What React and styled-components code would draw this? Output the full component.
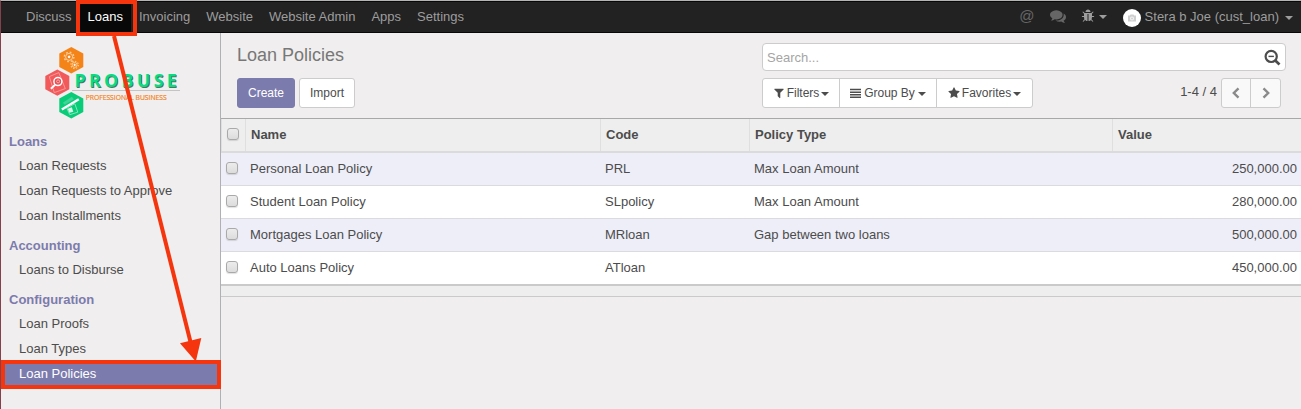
import React from "react";
import styled, { createGlobalStyle, css } from "styled-components";

const GlobalStyle = createGlobalStyle`
  *, *::before, *::after { box-sizing: border-box; }
  body {
    margin: 0;
    overflow: hidden;
    background: #f0eeee;
    color: #4c4c4c;
    font: 13px/20px "Liberation Sans", Arial, sans-serif;
  }
`;

const Page = styled.div`
  position: relative;
  display: flex;
  flex-direction: column;
  height: 409px;
  border-top: 1px solid #b4b4b4;
  border-left: 1px solid #84404c;
`;

const NavBar = styled.nav`
  display: flex;
  justify-content: space-between;
  flex: none;
  height: 32px;
  padding: 0 8px 0 17px;
  background: #222;
  border-top: 1px solid #080808;
  border-bottom: 1px solid #080808;
`;

const NavGroup = styled.div`
  display: flex;
  align-items: center;
`;

const NavLink = styled.a`
  padding: 5px 8px;
  height: 30px;
  line-height: 20px;
  color: ${(p) => (p.$active ? "#fff" : "#9d9d9d")};
  background: ${(p) => (p.$active ? "#080808" : "transparent")};
`;

const TrayItem = styled.span`
  display: flex;
  align-items: center;
  gap: ${(p) => p.$gap || 0}px;
  margin-left: ${(p) => p.$left || 0}px;
  padding-bottom: ${(p) => p.$lift || 0}px;
  color: ${(p) => (p.$dim ? "#666" : "#9d9d9d")};
`;

const AtSign = styled.span`
  font-size: 15px;
  line-height: 20px;
  height: 23px;
`;

const Caret = styled.i`
  display: inline-block;
  flex: none;
  margin-top: 2px;
  border-top: 4px solid currentColor;
  border-left: 4px solid transparent;
  border-right: 4px solid transparent;
`;

const Avatar = styled.span`
  display: flex;
  align-items: center;
  justify-content: center;
  width: 18px;
  height: 18px;
  margin-top: 2px;
  border-radius: 50%;
  background: #fff;
`;

const Body = styled.div`
  display: flex;
  flex: 1;
  min-height: 0;
`;

const Sidebar = styled.aside`
  flex: none;
  width: 220px;
  border-right: 1px solid #afafb6;
`;

const LogoArea = styled.div`
  height: 96px;
  padding: 12px 0 0 40px;
`;

const Section = styled.section`
  margin-bottom: 5px;
`;

const SectionTitle = styled.h4`
  margin: 0;
  padding: 3px 8px 1px;
  height: 24px;
  font-size: 13px;
  line-height: 20px;
  font-weight: bold;
  color: #7c7bad;
`;

const MenuItem = styled.a`
  display: block;
  height: 25px;
  padding: 3px 18px 2px;
  ${(p) =>
    p.$active &&
    css`
      background: #7c7bad;
      color: #fff;
    `}
`;

const Main = styled.main`
  display: flex;
  flex-direction: column;
  flex: 1;
  min-width: 0;
`;

const ControlPanel = styled.header`
  display: flex;
  justify-content: space-between;
  height: 86px;
  padding: 10px 15px 0 16px;
  border-bottom: 1px solid #a8a8a8;
`;

const TitleColumn = styled.div`
  display: flex;
  flex-direction: column;
`;

const Title = styled.h1`
  margin: 0 0 10px;
  height: 25px;
  font-size: 18px;
  line-height: 24px;
  font-weight: normal;
  color: #777;
`;

const ButtonRow = styled.div`
  display: flex;
  gap: 4px;
`;

const Button = styled.button`
  height: 30px;
  padding: 0 10px;
  border: 1px solid ${(p) => (p.$primary ? "#7c7bad" : "#ccc")};
  border-radius: 3px;
  background: ${(p) => (p.$primary ? "#7c7bad" : "#fff")};
  color: ${(p) => (p.$primary ? "#fff" : "#4c4c4c")};
  font: 12px/18px "Liberation Sans", Arial, sans-serif;
`;

const SearchColumn = styled.div`
  width: 524px;
`;

const SearchBox = styled.div`
  display: flex;
  align-items: center;
  justify-content: space-between;
  height: 28px;
  padding: 1px 4px 0;
  margin-bottom: 7px;
  border: 1px solid #ccc;
  border-radius: 4px;
  background: #fff;
  color: #a5a5a5;
`;

const SearchTools = styled.div`
  display: flex;
  justify-content: space-between;
  padding-right: 5px;
`;

const ButtonGroup = styled.div`
  display: flex;
  height: 30px;
  border: 1px solid #ccc;
  border-radius: 3px;
  background: ${(p) => (p.$soft ? "#f9f9f9" : "#fff")};
`;

const GroupButton = styled.span`
  display: flex;
  align-items: center;
  justify-content: center;
  gap: ${(p) => p.$gap ?? 3}px;
  width: ${(p) => p.$width}px;
  font-size: 12px;
  & + & { border-left: 1px solid #ccc; }
`;

const Pager = styled.div`
  display: flex;
  gap: 4px;
  line-height: 28px;
`;

const Table = styled.div`
  display: flex;
  flex-direction: column;
`;

const Row = styled.div`
  display: grid;
  grid-template-columns: 24px 355px 149px 363px 1fr;
  height: 33px;
  border-bottom: 1px solid #dbdbdf;
  background: ${(p) => (p.$odd ? "#eeeef8" : "#fff")};
  &:last-child { height: 34px; border-bottom: 2px solid #cacaca; }
`;

const HeaderRow = styled(Row)`
  height: 34px;
  border-bottom: 2px solid #dbdbdb;
  background: #eee;
  font-weight: bold;
`;

const Cell = styled.span`
  padding: 6px 4px 0 5px;
  text-align: ${(p) => (p.$right ? "right" : "left")};
`;

const HeadCell = styled(Cell)`
  border-left: 1px solid #dfdfdf;
`;

const Checkbox = styled.input.attrs({ type: "checkbox" })`
  appearance: none;
  display: block;
  width: 12px;
  height: 12px;
  margin: 3px 0 0;
  border: 1px solid #a9a9a9;
  border-radius: 3px;
  background: linear-gradient(#ececec, #dcdcdc);
  box-shadow: 0 1px 1px rgba(0, 0, 0, 0.12);
`;

const TableFooter = styled.div`
  height: 11px;
  background: #eee;
  border-bottom: 1px solid #cacaca;
`;

const HighlightBox = styled.div`
  position: absolute;
  left: ${(p) => p.$x}px;
  top: ${(p) => p.$y}px;
  width: ${(p) => p.$w}px;
  height: ${(p) => p.$h}px;
  border: 4px solid #f4350d;
`;

const ArrowOverlay = styled.svg`
  position: absolute;
  left: -1px;
  top: -1px;
  pointer-events: none;
`;

const Glyph = styled.svg`
  flex: none;
  display: block;
  fill: currentColor;
`;

const Icon = ({ size, d }) => (
  <Glyph width={size} height={size} viewBox="0 0 1792 1792">
    <path d={d} />
  </Glyph>
);

const ICONS = {
  bug: "M1696 960q0 26-19 45t-45 19h-224q0 171-67 290l208 209q19 19 19 45t-19 45q-18 19-45 19t-45-19l-198-197q-5 5-15 13t-42 28.5-65 36.5-82 29-97 13v-896h-128v896q-51 0-101.5-13.5t-87-33-66-39-43.5-32.5l-15-14-183 207q-20 21-48 21-24 0-43-16-19-18-20.5-44.5t15.5-46.5l202-227q-58-114-58-274h-224q-26 0-45-19t-19-45 19-45 45-19h224v-294l-173-173q-19-19-19-45t19-45 45-19 45 19l173 173h844l173-173q19-19 45-19t45 19 19 45-19 45l-173 173v294h224q26 0 45 19t19 45zm-480-576h-640q0-133 93.5-226.5t226.5-93.5 226.5 93.5 93.5 226.5z",
  comments:
    "M1408 768q0 139-94 257t-256.5 186.5-353.5 68.5q-86 0-176-16-124 88-278 128-36 9-86 16h-3q-11 0-20.5-8t-11.5-21q-1-3-1-6.5t.5-6.5 2-6l2.5-5 3.5-5.5 4-5 4.5-5 4-4.5q5-6 23-25t26-29.5 22.5-29 25-38.5 20.5-44q-124-72-195-177t-71-224q0-139 94-257t256.5-186.5 353.5-68.5 353.5 68.5 256.5 186.5 94 257zm384 256q0 120-71 224.5t-195 176.5q10 24 20.5 44t25 38.5 22.5 29 26 29.5 23 25q1 1 4 4.5t4.5 5 4 5 3.5 5.5l2.5 5 2 6 .5 6.5-1 6.5q-3 14-13 22t-22 7q-50-7-86-16-154-40-278-128-90 16-176 16-271 0-472-132 58 4 88 4 161 0 309-45t264-129q125-92 192-212t67-254q0-77-23-152 129 71 204 178t75 230z",
  star: "M1728 647q0 22-26 48l-363 354 86 500q1 7 1 20 0 21-10.5 35.5t-30.5 14.5q-19 0-40-12l-449-236-449 236q-22 12-40 12-21 0-31.5-14.5t-10.5-35.5q0-6 2-20l86-500-364-354q-25-27-25-48 0-37 56-46l502-73 225-455q19-41 49-41t49 41l225 455 502 73q56 9 56 46z",
  filter:
    "M1595 295q17 41-14 70l-493 493v742q0 42-39 59-13 5-25 5-27 0-45-19l-256-256q-19-19-19-45v-486l-493-493q-31-29-14-70 17-39 59-39h1280q42 0 59 39z",
};

const Lines = () => (
  <Glyph width="11" height="11" viewBox="0 0 11 11">
    <path d="M0 .8h11v1.5H0zM0 3.4h11v1.5H0zM0 6h11v1.5H0zM0 8.6h11v1.5H0z" />
  </Glyph>
);

const Chevron = ({ right }) => (
  <svg width="12" height="12" viewBox="0 0 12 12" fill="none" stroke="#8a8a8a" strokeWidth="2.4">
    <path d={right ? "M3.5 1.3 8.2 6 3.5 10.7" : "M8.5 1.3 3.8 6l4.7 4.7"} />
  </svg>
);

const SearchMinus = () => (
  <svg width="17" height="17" viewBox="0 0 17 17" fill="none" stroke="#4c4c4c">
    <circle cx="7.2" cy="7.4" r="5.6" strokeWidth="2.2" />
    <path d="M4.5 7.4h5.4" strokeWidth="1.4" />
    <path d="m11.3 11.5 4.2 3.9" strokeWidth="2.7" />
  </svg>
);

const Camera = () => (
  <svg width="10" height="10" viewBox="0 0 10 10">
    <path d="M1 2.500h1.800l.7-1h3l.7 1H9v6H1z" fill="#cfcfcf" />
    <circle cx="5" cy="5.400" r="2" fill="#f4f4f4" />
    <circle cx="5" cy="5.400" r="1" fill="#cfcfcf" />
  </svg>
);

const HEX = "M0-13.2 12-6.7V6.7L0 13.2-12 6.7V-6.7z";

const Logo = () => (
  <svg width="142" height="76" viewBox="41 45 142 76" fontFamily='"Open Sans", sans-serif'>
    <g transform="translate(71.3 60.3)">
      <path d={HEX} fill="#f48418" />
      <g fill="none" stroke="#fbd0a0">
        <circle cx="-2.2" cy="-3.4" r="3.5" strokeWidth="1" />
        <circle cx="-2.2" cy="-3.4" r="4.8" strokeWidth="1.3" strokeDasharray="1.8 1.97" />
        <circle cx="-2.2" cy="-3.4" r=".9" fill="#fff" stroke="#fff" />
        <circle cx="3.3" cy="4.6" r="2.5" strokeWidth=".9" />
        <circle cx="3.3" cy="4.6" r="3.7" strokeWidth="1.1" strokeDasharray="1.4 1.5" />
        <circle cx="3.3" cy="4.6" r=".7" fill="#fff" stroke="#fff" />
      </g>
    </g>
    <g transform="translate(57.3 82.6)">
      <path d={HEX} fill="#f2595b" />
      <path d="m-8-6 9.5-4L8 6-3 10z" fill="none" stroke="#f9a7a5" strokeWidth=".8" />
      <circle cx=".6" cy="-1" r="4" fill="#e94d50" stroke="#fff" strokeWidth="1.5" />
      <circle cx=".8" cy="-1.2" r="1.5" fill="none" stroke="#fbd0d0" strokeWidth=".7" />
      <path d="m-2.4 2.3-4 3.9" stroke="#fff" strokeWidth="2" />
    </g>
    <g transform="translate(71.3 105.2)">
      <path d={HEX} fill="#08cc78" />
      <path d="m-8.5-2.500 9-6 2 2.500-9 5.500z" fill="#3fd596" />
      <path d="m-9.500 4.300 17-10.300" stroke="#fff" strokeWidth="2.400" />
      <path d="m-4.500 3 8-4.500L6.500 7l-8 2.500z" fill="none" stroke="#8feac2" strokeWidth=".9" />
      <path d="m-3.500 3.500 4-1.500 1.500 4.500-4 1z" fill="#d4f8e8" />
    </g>
    <path d="M72 90.5h108" stroke="#c4c4c4" />
    <g fontSize="18" fontWeight="700">
      <text x="75.2" y="88" fill="#55705f" textLength="102.5" lengthAdjust="spacing">PROBUSE</text>
      <text x="74.4" y="87" fill="#08dc82" textLength="102.5" lengthAdjust="spacing">PROBUSE</text>
    </g>
    <text x="85.7" y="100" fontSize="7.4" fill="#f1841f" stroke="#f1841f" strokeWidth=".2" textLength="81" lengthAdjust="spacingAndGlyphs">
      PROFESSIONAL BUSINESS
    </text>
  </svg>
);

const NAV = ["Discuss", "Loans", "Invoicing", "Website", "Website Admin", "Apps", "Settings"];

const MENU = [
  ["Loans", ["Loan Requests", "Loan Requests to Approve", "Loan Installments"]],
  ["Accounting", ["Loans to Disburse"]],
  ["Configuration", ["Loan Proofs", "Loan Types", "Loan Policies"]],
];

const POLICIES = [
  ["Personal Loan Policy", "PRL", "Max Loan Amount", "250,000.00"],
  ["Student Loan Policy", "SLpolicy", "Max Loan Amount", "280,000.00"],
  ["Mortgages Loan Policy", "MRloan", "Gap between two loans", "500,000.00"],
  ["Auto Loans Policy", "ATloan", "", "450,000.00"],
];

export default function App() {
  return (
    <Page>
      <GlobalStyle />
      <NavBar>
        <NavGroup>
          {NAV.map((label) => (
            <NavLink key={label} $active={label === "Loans"}>{label}</NavLink>
          ))}
        </NavGroup>
        <NavGroup>
          <TrayItem $dim><AtSign>@</AtSign></TrayItem>
          <TrayItem $dim $left={15} $lift={2}><Icon size={16} d={ICONS.comments} /></TrayItem>
          <TrayItem $left={15} $gap={4} $lift={2}><Icon size={14} d={ICONS.bug} /><Caret /></TrayItem>
          <TrayItem $left={16} $gap={4}>
            <Avatar><Camera /></Avatar>
            <span>Stera b Joe (cust_loan)</span>
          </TrayItem>
          <TrayItem $left={6}><Caret /></TrayItem>
        </NavGroup>
      </NavBar>
      <Body>
        <Sidebar>
          <LogoArea><Logo /></LogoArea>
          {MENU.map(([title, items]) => (
            <Section key={title}>
              <SectionTitle>{title}</SectionTitle>
              {items.map((item) => (
                <MenuItem key={item} $active={item === "Loan Policies"}>{item}</MenuItem>
              ))}
            </Section>
          ))}
        </Sidebar>
        <Main>
          <ControlPanel>
            <TitleColumn>
              <Title>Loan Policies</Title>
              <ButtonRow>
                <Button $primary>Create</Button>
                <Button>Import</Button>
              </ButtonRow>
            </TitleColumn>
            <SearchColumn>
              <SearchBox><span>Search...</span><SearchMinus /></SearchBox>
              <SearchTools>
                <ButtonGroup>
                  <GroupButton $width={76} $gap={2}><Icon size={12} d={ICONS.filter} />Filters<Caret /></GroupButton>
                  <GroupButton $width={97}><Lines />Group By<Caret /></GroupButton>
                  <GroupButton $width={96} $gap={2}><Icon size={12} d={ICONS.star} />Favorites<Caret /></GroupButton>
                </ButtonGroup>
                <Pager>
                  <span>1-4 / 4</span>
                  <ButtonGroup $soft>
                    <GroupButton $width={28}><Chevron /></GroupButton>
                    <GroupButton $width={30}><Chevron right /></GroupButton>
                  </ButtonGroup>
                </Pager>
              </SearchTools>
            </SearchColumn>
          </ControlPanel>
          <Table>
            <HeaderRow>
              <HeadCell><Checkbox /></HeadCell>
              {["Name", "Code", "Policy Type", "Value"].map((h) => (
                <HeadCell key={h}>{h}</HeadCell>
              ))}
            </HeaderRow>
            {POLICIES.map((policy, i) => (
              <Row key={policy[0]} $odd={i % 2 === 0}>
                <Cell><Checkbox /></Cell>
                {policy.map((value, col) => (
                  <Cell key={col} $right={col === 3}>{value}</Cell>
                ))}
              </Row>
            ))}
          </Table>
          <TableFooter />
        </Main>
      </Body>
      <HighlightBox $x={75} $y={-1} $w={61} $h={36} />
      <HighlightBox $x={0} $y={359} $w={220} $h={29} />
      <ArrowOverlay width="230" height="409" viewBox="0 0 230 409">
        <path d="M114 36 190.5 342" stroke="#f4350d" strokeWidth="4" />
        <path d="M180 343.2 201.3 338 195.8 361.5z" fill="#f4350d" />
      </ArrowOverlay>
    </Page>
  );
}
